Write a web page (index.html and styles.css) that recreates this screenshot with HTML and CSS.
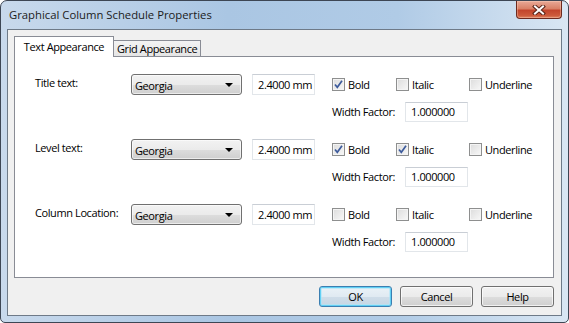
FILE: index.html
```html
<!DOCTYPE html>
<html lang="en">
<head>
    <meta charset="UTF-8">
    <title>Graphical Column Schedule Properties</title>
    <link rel="stylesheet" href="styles.css">
</head>
<body>
    <div class="window">
        <div class="titlebar">
            <span class="title">Graphical Column Schedule Properties</span>
            <button class="close-btn" aria-label="Close">
                <svg width="14" height="10" viewBox="0 0 14 10">
                    <path d="M3 1.5 L11 8.5 M11 1.5 L3 8.5" stroke="#5a2418" stroke-width="4" stroke-linecap="square"/>
                    <path d="M3 1.5 L11 8.5 M11 1.5 L3 8.5" stroke="#ffffff" stroke-width="2" stroke-linecap="square"/>
                </svg>
            </button>
        </div>

        <div class="client">
            <div class="tabs">
                <div class="tab active">Text Appearance</div>
                <div class="tab">Grid Appearance</div>
            </div>

            <div class="panel">
                <div class="row">
                    <span class="row-label">Title text:</span>
                    <div class="combo"><span>Georgia</span><i class="arrow"></i></div>
                    <div class="textbox size">2.4000 mm</div>
                    <div class="options">
                        <div class="checks">
                            <label class="check bold"><span class="box checked"></span>Bold</label>
                            <label class="check italic"><span class="box"></span>Italic</label>
                            <label class="check"><span class="box"></span>Underline</label>
                        </div>
                        <div class="factor">
                            <span class="factor-label">Width Factor:</span>
                            <div class="textbox factor-box">1.000000</div>
                        </div>
                    </div>
                </div>

                <div class="row">
                    <span class="row-label">Level text:</span>
                    <div class="combo"><span>Georgia</span><i class="arrow"></i></div>
                    <div class="textbox size">2.4000 mm</div>
                    <div class="options">
                        <div class="checks">
                            <label class="check bold"><span class="box checked"></span>Bold</label>
                            <label class="check italic"><span class="box checked"></span>Italic</label>
                            <label class="check"><span class="box"></span>Underline</label>
                        </div>
                        <div class="factor">
                            <span class="factor-label">Width Factor:</span>
                            <div class="textbox factor-box">1.000000</div>
                        </div>
                    </div>
                </div>

                <div class="row">
                    <span class="row-label">Column Location:</span>
                    <div class="combo"><span>Georgia</span><i class="arrow"></i></div>
                    <div class="textbox size">2.4000 mm</div>
                    <div class="options">
                        <div class="checks">
                            <label class="check bold"><span class="box"></span>Bold</label>
                            <label class="check italic"><span class="box"></span>Italic</label>
                            <label class="check"><span class="box"></span>Underline</label>
                        </div>
                        <div class="factor">
                            <span class="factor-label">Width Factor:</span>
                            <div class="textbox factor-box">1.000000</div>
                        </div>
                    </div>
                </div>
            </div>

            <div class="buttons">
                <button class="btn default">OK</button>
                <button class="btn">Cancel</button>
                <button class="btn">Help</button>
            </div>
        </div>
    </div>
</body>
</html>
```

FILE: styles.css
```css
* {
    margin: 0;
    padding: 0;
    box-sizing: border-box;
}

body {
    font-family: 'Open Sans', 'Noto Sans', sans-serif;
    font-size: 11px;
    letter-spacing: -0.4px;
    color: #000;
    background: #fff;
}

.window {
    width: 569px;
    height: 323px;
    border: 1px solid #3d4654;
    border-radius: 7px 7px 5px 5px;
    padding: 0 6px 6px;
    background: linear-gradient(to right, #c8d9ec 0%, #aac6e3 40%, #b0cbe6 70%, #d9e6f3 100%);
    display: flex;
    flex-direction: column;
}

/* title bar */
.titlebar {
    height: 28px;
    display: flex;
    justify-content: space-between;
    align-items: flex-start;
}

.title {
    padding: 6px 0 0 2px;
    line-height: 16px;
    font-size: 11.3px;
    letter-spacing: 0;
    color: #1b1b1b;
}

.close-btn {
    width: 46px;
    height: 18px;
    border: 1px solid #6d2a1f;
    border-top: none;
    border-radius: 0 0 4px 4px;
    background: linear-gradient(#e9a997 0%, #d98167 45%, #c3452c 55%, #cd5a3b 85%, #e08462 100%);
    box-shadow: inset 0 0 0 1px rgba(255, 220, 200, 0.35);
    display: flex;
    align-items: center;
    justify-content: center;
}

/* client area */
.client {
    flex: 1;
    background: #f0f0f0;
    border: 1px solid #6e7a88;
    padding: 7px 7px 0 6px;
    display: flex;
    flex-direction: column;
}

.tabs {
    display: flex;
    align-items: flex-end;
    height: 20px;
    margin-bottom: -1px;
}

.tab {
    height: 17px;
    padding: 0 3px;
    border: 1px solid #898c95;
    border-bottom: none;
    border-left: none;
    background: linear-gradient(#f3f3f3, #e4e4e4);
    line-height: 16px;
    color: #000;
}

.tab.active {
    height: 21px;
    width: 100px;
    padding: 0;
    text-align: center;
    border-left: 1px solid #898c95;
    background: #fff;
    line-height: 19px;
    position: relative;
    z-index: 1;
}

.panel {
    height: 222px;
    background: #fff;
    border: 1px solid #898c95;
    padding: 17px 0 0 20px;
}

.row {
    display: flex;
    align-items: flex-start;
    height: 65px;
}

.row-label {
    width: 96px;
    line-height: 16px;
    padding-top: 1px;
}

.combo {
    width: 111px;
    height: 21px;
    border: 1px solid #707070;
    border-radius: 3px;
    background: linear-gradient(#f2f2f2 0%, #ebebeb 50%, #dddddd 51%, #cfcfcf 100%);
    box-shadow: inset 0 0 0 1px rgba(255, 255, 255, 0.6);
    display: flex;
    align-items: center;
    justify-content: space-between;
    padding: 1px 8px 0 3px;
}

.arrow {
    width: 0;
    height: 0;
    border-left: 4px solid transparent;
    border-right: 4px solid transparent;
    border-top: 4px solid #000;
}

.textbox {
    height: 21px;
    border: 1px solid #e2e6ea;
    border-top-color: #c9ced5;
    background: #fff;
    line-height: 19px;
    padding-left: 5px;
    white-space: nowrap;
}

.size {
    width: 63px;
    margin-left: 10px;
}

.options {
    margin-left: 17px;
}

.checks {
    display: flex;
    height: 21px;
    align-items: center;
}

.check {
    display: flex;
    align-items: center;
    gap: 3px;
}

.check.bold {
    width: 64px;
}

.check.italic {
    width: 73px;
}

.box {
    width: 13px;
    height: 13px;
    border: 1px solid #8e8f8f;
    background: linear-gradient(135deg, #dcdcdc, #f8f8f8);
    box-shadow: inset 0 0 0 1px #f4f4f4;
    display: inline-block;
}

.box.checked {
    background-image:
        url("data:image/svg+xml,%3Csvg xmlns='http://www.w3.org/2000/svg' width='11' height='11'%3E%3Cpath d='M2 5.5 L4.3 8.3 L9 1.8' fill='none' stroke='%233d5b9c' stroke-width='1.7'/%3E%3C/svg%3E"),
        linear-gradient(135deg, #dcdcdc, #f8f8f8);
    background-repeat: no-repeat;
    background-position: center;
}

.factor {
    display: flex;
    align-items: center;
    margin-top: 7px;
}

.factor-label {
    width: 73px;
    line-height: 16px;
}

.factor-box {
    width: 63px;
    height: 20px;
    line-height: 18px;
}

/* dialog buttons */
.buttons {
    display: flex;
    justify-content: flex-end;
    gap: 8px;
    margin-top: 8px;
}

.btn {
    width: 73px;
    height: 21px;
    border: 1px solid #707070;
    border-radius: 3px;
    background: linear-gradient(#f2f2f2 0%, #ebebeb 50%, #dddddd 51%, #cfcfcf 100%);
    box-shadow: inset 0 0 0 1px rgba(255, 255, 255, 0.7);
    font-family: inherit;
    font-size: 11px;
    letter-spacing: -0.4px;
    color: #000;
}

.btn.default {
    border-color: #3c7fb1;
    background: linear-gradient(#eaf2f7 0%, #e0eaf2 50%, #cfdde9 51%, #c6d6e3 100%);
    box-shadow: inset 0 0 0 1px #62d0f4, inset 0 0 0 2px rgba(170, 230, 250, 0.6);
}
```
